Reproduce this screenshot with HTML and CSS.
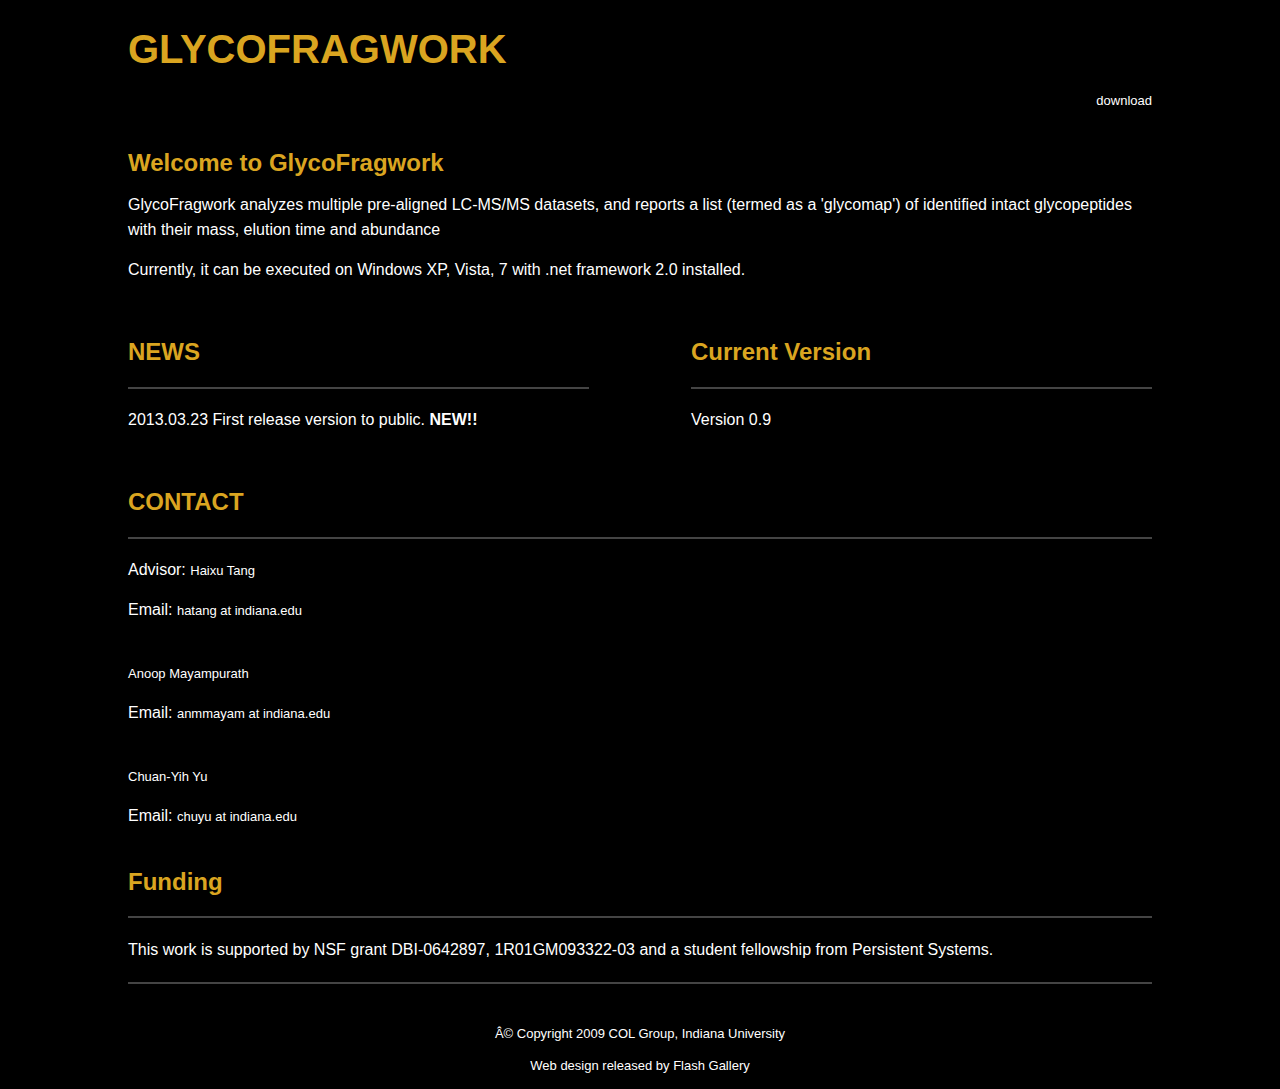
FILE: index.html
```
<!DOCTYPE html>
<html>
<head>
<meta charset="utf-8">
<title>GlycoFragwork</title>
<link rel="stylesheet" href="styles.css">
</head>
<body>
<div class="page">
  <header class="header">
    <h1 class="logo">GLYCOFRAGWORK</h1>
    <nav class="nav"><a href="#" class="nav-link">download</a></nav>
  </header>

  <section class="intro">
    <h2 class="heading">Welcome to GlycoFragwork</h2>
    <p class="text">GlycoFragwork analyzes multiple pre-aligned LC-MS/MS datasets, and reports a list (termed as a 'glycomap') of identified intact glycopeptides with their mass, elution time and abundance</p>
    <p class="text">Currently, it can be executed on Windows XP, Vista, 7 with .net framework 2.0 installed.</p>
  </section>

  <div class="columns">
    <section class="col">
      <h2 class="heading">NEWS</h2>
      <hr class="rule">
      <p class="text">2013.03.23 First release version to public. <b>NEW!!</b></p>
    </section>
    <section class="col">
      <h2 class="heading">Current Version</h2>
      <hr class="rule">
      <p class="text">Version 0.9</p>
    </section>
  </div>

  <section class="contact">
    <h2 class="heading">CONTACT</h2>
    <hr class="rule">
    <div class="person">
      <p class="text">Advisor: <span class="small">Haixu Tang</span></p>
      <p class="text">Email: <span class="small">hatang at indiana.edu</span></p>
    </div>
    <div class="person">
      <p class="text"><span class="small">Anoop Mayampurath</span></p>
      <p class="text">Email: <span class="small">anmmayam at indiana.edu</span></p>
    </div>
    <div class="person">
      <p class="text"><span class="small">Chuan-Yih Yu</span></p>
      <p class="text">Email: <span class="small">chuyu at indiana.edu</span></p>
    </div>
  </section>

  <section class="funding">
    <h2 class="heading">Funding</h2>
    <hr class="rule rule-top">
    <p class="text">This work is supported by NSF grant DBI-0642897, 1R01GM093322-03 and a student fellowship from Persistent Systems.</p>
    <hr class="rule rule-bottom">
  </section>

  <footer class="footer">
    <p class="foot-line">Â© Copyright 2009 COL Group, Indiana University</p>
    <p class="foot-line">Web design released by Flash Gallery</p>
  </footer>
</div>
</body>
</html>
```

FILE: styles.css
```
html, body {
  margin: 0;
  padding: 0;
  background: #000;
  color: #fff;
  font-family: "Liberation Sans", Arial, Helvetica, sans-serif;
}

.page {
  width: 1024px;
  margin: 0 auto;
  padding-top: 25px;
  padding-bottom: 16px;
}

.logo {
  margin: 0;
  font-size: 40px;
  line-height: 48px;
  font-weight: bold;
  color: #daa520;
}

.nav {
  display: flex;
  justify-content: flex-end;
  margin-top: 20px;
}

.nav-link {
  color: #fff;
  text-decoration: none;
  font-size: 13px;
  line-height: 15px;
}

.heading {
  margin: 0;
  font-size: 24px;
  line-height: 29px;
  font-weight: bold;
  color: #daa520;
}

.text {
  margin: 0 0 15px;
  font-size: 16px;
  line-height: 25px;
}

.text:last-child {
  margin-bottom: 0;
}

.small {
  font-size: 13px;
}

.intro {
  margin-top: 40px;
}

.intro .heading {
  margin-bottom: 15px;
}

.rule {
  border: 0;
  height: 2px;
  background: #444;
  margin: 21px 0 18px;
}

.columns {
  display: grid;
  grid-template-columns: 461px 461px;
  justify-content: space-between;
  margin-top: 55px;
}

.contact {
  margin-top: 55px;
}

.person .text {
  margin-bottom: 14px;
}

.person .text:last-child {
  margin-bottom: 0;
}

.person + .person {
  margin-top: 37px;
}

.funding {
  margin-top: 38px;
}

.rule-top {
  margin-top: 20px;
  margin-bottom: 19px;
}

.rule-bottom {
  margin-top: 20px;
  margin-bottom: 0;
}

.footer {
  margin-top: 42px;
  text-align: center;
}

.foot-line {
  margin: 0 0 17px;
  font-size: 13px;
  line-height: 15px;
}

.foot-line:last-child {
  margin-bottom: 0;
}
```
